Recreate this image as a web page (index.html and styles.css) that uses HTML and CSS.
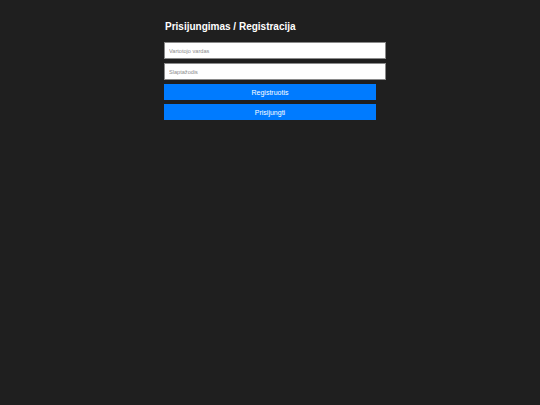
FILE: index.html
```html
<!DOCTYPE html>
<html lang="lt">
<head>
<meta charset="utf-8">
<title>Prisijungimas / Registracija</title>
<link rel="stylesheet" href="styles.css">
</head>
<body>
<div class="container">
  <h2 class="title">Prisijungimas / Registracija</h2>
  <form class="form">
    <input class="field" type="text" placeholder="Vartotojo vardas">
    <input class="field" type="password" placeholder="Slaptažodis">
    <button class="btn" type="button">Registruotis</button>
    <button class="btn" type="button">Prisijungti</button>
  </form>
</div>
</body>
</html>
```
FILE: styles.css
```css
html, body {
  margin: 0;
  padding: 0;
  background: #1f1f1f;
  height: 100%;
}
body {
  font-family: "Liberation Sans", Arial, sans-serif;
  color: #ffffff;
}
.container {
  width: 212px;
  margin: 0 auto;
  padding-top: 21px;
}
.title {
  font-size: 10px;
  font-weight: bold;
  margin: 0 0 9px 1px;
  line-height: 12px;
}
.form {
  display: flex;
  flex-direction: column;
  gap: 4px;
}
.field {
  box-sizing: content-box;
  width: 100%;
  height: 15px;
  padding: 0 4px;
  border: 1px solid #8a8a8a;
  background: #ffffff;
  font-family: "Liberation Sans", Arial, sans-serif;
  font-size: 5.6px;
  color: #333;
  outline: none;
  margin: 0;
}
.field::placeholder {
  color: #8c8c8c;
}
.btn {
  width: 100%;
  height: 16px;
  padding: 0;
  margin: 0;
  border: none;
  background: #007bff;
  color: #ffffff;
  font-family: "Liberation Sans", Arial, sans-serif;
  font-size: 7px;
  cursor: pointer;
}
```
